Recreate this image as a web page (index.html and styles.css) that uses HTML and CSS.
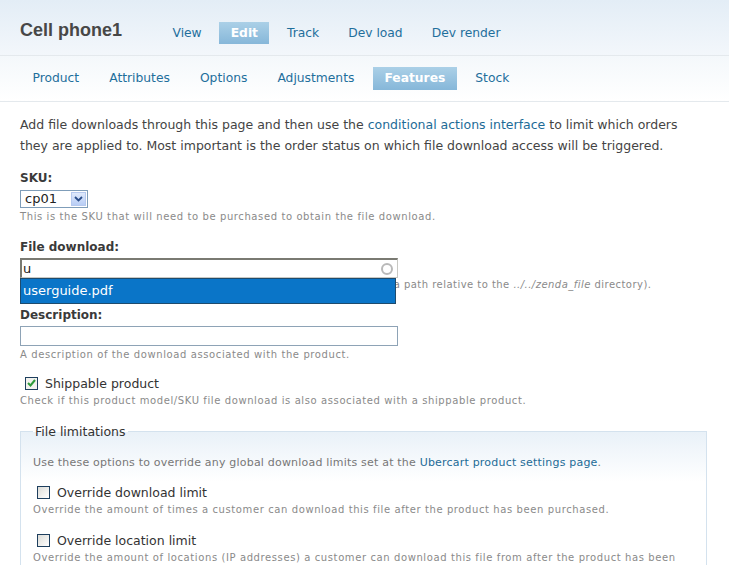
FILE: index.html
```html
<!DOCTYPE html>
<html>
<head>
<meta charset="utf-8">
<link rel="stylesheet" href="styles.css">
</head>
<body>
<div class="hdr">
  <div class="row1">
    <h1 class="title">Cell phone1</h1>
    <ul class="tabs">
      <li><a>View</a></li>
      <li class="active"><a>Edit</a></li>
      <li><a>Track</a></li>
      <li><a>Dev load</a></li>
      <li><a>Dev render</a></li>
    </ul>
  </div>
  <div class="row2">
    <ul class="tabs sub">
      <li><a>Product</a></li>
      <li><a>Attributes</a></li>
      <li><a>Options</a></li>
      <li><a>Adjustments</a></li>
      <li class="active"><a>Features</a></li>
      <li><a>Stock</a></li>
    </ul>
  </div>
</div>
<div class="content">
  <p class="intro">Add file downloads through this page and then use the <a class="lnk">conditional actions interface</a> to limit which orders they are applied to. Most important is the order status on which file download access will be triggered.</p>

  <div class="item">
    <label class="lbl">SKU:</label>
    <div class="select"><span class="sv">cp01</span><span class="sarrow"><svg width="9" height="6" viewBox="0 0 9 6"><path d="M1 1l3.5 3.5L8 1" fill="none" stroke="#2a4d8a" stroke-width="1.8"/></svg></span></div>
    <div class="desc">This is the SKU that will need to be purchased to obtain the file download.</div>
  </div>

  <div class="item">
    <label class="lbl">File download:</label>
    <div class="acwrap">
      <div class="txt ac">u<span class="throb"></span></div>
      <div class="desc pathdesc">Enter the path of the file to download, relative to the site root (or a path relative to the <i>../../zenda_file</i> directory).</div>
      <div class="popup">userguide.pdf</div>
    </div>
  </div>

  <div class="item item-short">
    <label class="lbl lbl-tight">Description:</label>
    <div class="txt"></div>
    <div class="desc">A description of the download associated with the product.</div>
  </div>

  <div class="item">
    <div class="check"><span class="cb on"><svg width="9" height="8" viewBox="0 0 9 8"><path d="M1 4l2.5 2.5L8 1" fill="none" stroke="#2e9b3a" stroke-width="2"/></svg></span><span class="cl">Shippable product</span></div>
    <div class="desc">Check if this product model/SKU file download is also associated with a shippable product.</div>
  </div>

  <fieldset class="fs">
    <legend>File limitations</legend>
    <div class="fsdesc">Use these options to override any global download limits set at the <a class="lnk">Ubercart product settings page</a>.</div>
    <div class="item">
      <div class="check"><span class="cb cb-fs"></span><span class="cl">Override download limit</span></div>
      <div class="desc">Override the amount of times a customer can download this file after the product has been purchased.</div>
    </div>
    <div class="item">
      <div class="check"><span class="cb cb-fs"></span><span class="cl">Override location limit</span></div>
      <div class="desc">Override the amount of locations (IP addresses) a customer can download this file from after the product has been purchased.</div>
    </div>
  </fieldset>
</div>
</body>
</html>
```

FILE: styles.css
```css
html, body {
  margin: 0;
  padding: 0;
  background: #fff;
  overflow: hidden;
}
body {
  font-family: "DejaVu Sans", Verdana, sans-serif;
  color: #444;
  font-size: 12.5px;
}
.hdr {
  background: linear-gradient(#e3edf6 0%, #f3f7fb 55%, #ffffff 100%);
}
.row1 {
  height: 55px;
  display: flex;
  align-items: flex-start;
  border-bottom: 1px solid #e4e9ed;
}
.title {
  margin: 0;
  padding: 18px 0 0 20px;
  width: 141px;
  font-family: "Liberation Sans", Arial, sans-serif;
  font-size: 18px;
  font-weight: bold;
  color: #474747;
  line-height: 24px;
}
.tabs {
  list-style: none;
  margin: 0;
  padding: 0;
  display: flex;
  gap: 6px;
}
.row1 .tabs {
  margin-top: 22px;
}
.tabs li a {
  display: block;
  padding: 0 11.5px;
  height: 22px;
  line-height: 22px;
  color: #1f6f9c;
  font-size: 12.3px;
}
.tabs li.active a {
  background: linear-gradient(#abd0e7, #86b7d9);
  color: #fff;
  font-weight: bold;
}
.row2 {
  height: 45px;
  border-bottom: 1px solid #e4e9ed;
  background: linear-gradient(#f4f8fb, #ffffff);
}
.tabs.sub {
  padding: 11px 0 0 21px;
  gap: 7px;
}
.tabs.sub li a {
  height: 23px;
  line-height: 23px;
}
.content {
  padding: 12px 20px 0 20px;
}
.intro {
  margin: 0 0 15px 0;
  line-height: 21px;
  color: #444;
}
.lnk {
  color: #1d6b97;
}
.item {
  margin-bottom: 16px;
}
.item-short {
  margin-bottom: 12px;
}
.lbl {
  display: block;
  font-weight: bold;
  font-size: 12px;
  line-height: 15px;
  color: #3a3a3a;
  margin-bottom: 4px;
}
.lbl-tight {
  margin-bottom: 3px;
}
.select {
  width: 68px;
  height: 18px;
  border: 1px solid #7f9db9;
  display: flex;
  align-items: center;
  justify-content: space-between;
  padding: 0 1px 0 4px;
  box-sizing: border-box;
  font-size: 13px;
  color: #222;
}
.sv {
  line-height: 16px;
}
.sarrow {
  width: 15px;
  height: 14px;
  background: linear-gradient(#dfe9fb, #b8cdf5);
  border: 1px solid #b6c9ef;
  box-sizing: border-box;
  display: flex;
  align-items: center;
  justify-content: center;
}
.desc {
  font-size: 10px;
  line-height: 14px;
  color: #8a8a8a;
  margin-top: 2px;
  letter-spacing: 0.6px;
}
.acwrap {
  position: relative;
  margin-top: -1px;
}
.txt {
  width: 378px;
  height: 20px;
  border: 1px solid #8ea3b6;
  background: #fff;
  position: relative;
  font-family: "DejaVu Sans", Tahoma, sans-serif;
  font-size: 13px;
  line-height: 18px;
  color: #222;
  padding-left: 3px;
  box-sizing: border-box;
}
.txt.ac {
  border-color: #c9c9c4;
  border-top: 2px solid #7a7a72;
  border-left: 2px solid #7a7a72;
  height: 20px;
  width: 378px;
  line-height: 17px;
  padding-left: 1px;
}
.throb {
  position: absolute;
  right: 4px;
  top: 3px;
  width: 8px;
  height: 8px;
  border: 2px solid #b9b9b9;
  border-radius: 50%;
}
.pathdesc {
  margin-top: 0;
  white-space: nowrap;
  letter-spacing: 0.47px;
  padding-left: 11px;
}
.popup {
  position: absolute;
  left: 0;
  top: 20px;
  width: 376px;
  height: 26px;
  box-sizing: border-box;
  background: #0a75c8;
  border: 1px solid #1e4b6d;
  color: #fff;
  font-size: 13px;
  line-height: 24px;
  padding-left: 2px;
}
.check {
  display: flex;
  align-items: center;
  height: 18px;
}
.cb {
  width: 13px;
  height: 13px;
  box-sizing: border-box;
  border: 1px solid #1e3f5e;
  background: linear-gradient(135deg, #dcdcd7, #ffffff);
  margin: 0 7px 0 5px;
  display: flex;
  align-items: center;
  justify-content: center;
}
.cb.on {
  background: #f2f2ee;
}
.cb-fs {
  margin-left: 4px;
  margin-right: 7px;
}
.cl {
  font-size: 12.5px;
  color: #333;
}
.fs {
  margin: 12px 0 0 0;
  padding: 17px 12px 0 12px;
  border: 1px solid #d4e2ee;
  background: linear-gradient(#e9f1f8 0px, #ffffff 50px);
  min-width: 0;
  width: 661px;
}
.fs legend {
  padding: 0 2px;
  margin-left: 0;
  font-size: 12.5px;
  color: #333;
}
.fsdesc {
  font-size: 11px;
  color: #777;
  margin-bottom: 14px;
  letter-spacing: 0.2px;
}
.fs .item {
  margin-bottom: 14px;
}
```
